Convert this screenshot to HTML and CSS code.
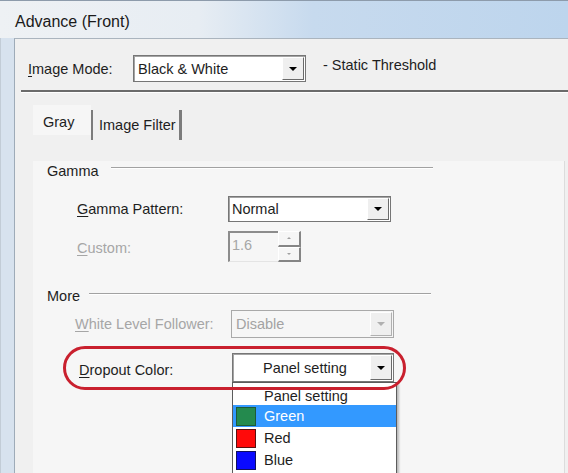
FILE: index.html
```html
<!DOCTYPE html>
<html lang="en">
<head>
    <meta charset="UTF-8">
    <meta name="viewport" content="width=device-width, initial-scale=1.0">
    <title>Advance (Front)</title>
    <link rel="stylesheet" href="styles.css">
</head>
<body>
    <div class="window">
        <!-- title bar -->
        <div class="titlebar">Advance (Front)</div>

        <div class="frame">
            <div class="client">
                <!-- image mode -->
                <div class="mode-row">
                    <span class="mode-label"><u>I</u>mage Mode:</span>
                    <div class="combo combo-mode">
                        <span class="combo-text">Black &amp; White</span>
                        <span class="combo-btn"><i class="arrow"></i></span>
                    </div>
                    <span class="mode-note">- Static Threshold</span>
                </div>
                <div class="rule"></div>

                <!-- tabs -->
                <div class="tabs">
                    <div class="tab active">Gray</div>
                    <div class="tab">Image Filter</div>
                </div>

                <div class="panel">
                    <div class="group-head">
                        <span>Gamma</span>
                        <span class="group-line"></span>
                    </div>
                    <div class="field field-gamma">
                        <span class="field-label"><u>G</u>amma Pattern:</span>
                        <div class="combo combo-gamma">
                            <span class="combo-text">Normal</span>
                            <span class="combo-btn"><i class="arrow"></i></span>
                        </div>
                    </div>
                    <div class="field field-custom">
                        <span class="field-label disabled"><u>C</u>ustom:</span>
                        <div class="spin">
                            <span class="spin-text">1.6</span>
                            <span class="spin-btns">
                                <span class="spin-btn"><i class="arrow-up"></i></span>
                                <span class="spin-btn"><i class="arrow-down"></i></span>
                            </span>
                        </div>
                    </div>

                    <div class="group-head group-more">
                        <span>More</span>
                        <span class="group-line"></span>
                    </div>
                    <div class="field field-white">
                        <span class="field-label disabled"><u>W</u>hite Level Follower:</span>
                        <div class="combo combo-off">
                            <span class="combo-text">Disable</span>
                            <span class="combo-btn"><i class="arrow"></i></span>
                        </div>
                    </div>
                    <div class="field field-dropout">
                        <span class="field-label"><u>D</u>ropout Color:</span>
                        <div class="combo combo-drop">
                            <span class="combo-text">Panel setting</span>
                            <span class="combo-btn"><i class="arrow"></i></span>
                            <ul class="drop-list">
                                <li><span class="swatch none"></span>Panel setting</li>
                                <li class="selected"><span class="swatch green"></span>Green</li>
                                <li><span class="swatch red"></span>Red</li>
                                <li><span class="swatch blue"></span>Blue</li>
                            </ul>
                        </div>
                        <div class="ring"></div>
                    </div>
                </div>
            </div>
        </div>
    </div>
</body>
</html>
```

FILE: styles.css
```css
* {
    margin: 0;
    padding: 0;
    box-sizing: border-box;
}

body {
    width: 568px;
    height: 473px;
    overflow: hidden;
    background-color: #f0f0f0;
    font-family: 'Liberation Sans', Arial, sans-serif;
    font-size: 14.5px;
    color: #1e1e1e;
}

u {
    text-decoration: underline;
    text-underline-offset: 2px;
}

/* window */
.window {
    height: 473px;
    overflow: hidden;
    display: flex;
    flex-direction: column;
    background-color: #d7e2ee;
}

.titlebar {
    height: 38px;
    flex-shrink: 0;
    padding: 5px 0 0 15px;
    display: flex;
    align-items: center;
    font-size: 16px;
    color: #1a1a1a;
    border-top: 1px solid #8d9bab;
    background: linear-gradient(90deg, #eef1f4 0%, #e7edf3 35%, #c7daee 55%, #bdd5ed 100%);
}

.frame {
    flex: 1;
    display: flex;
    padding-left: 13px;
    border-left: 1px solid #c2ccd6;
}

.client {
    flex: 1;
    background-color: #f0f0f0;
    border-left: 1px solid #9eabb8;
    border-top: 1px solid #aab4be;
}

/* image mode row */
.mode-row {
    display: flex;
    align-items: center;
    height: 27px;
    margin-top: 16px;
    padding-left: 13px;
}

.mode-label {
    width: 105px;
}

.mode-note {
    align-self: flex-start;
    line-height: 20px;
    margin-left: 17px;
}

.rule {
    margin: 8px 0 0 6px;
    height: 3px;
    border-top: 2px solid #6b6b6b;
    border-bottom: 1px solid #ffffff;
}

/* combo boxes */
.combo {
    position: relative;
    display: flex;
    background-color: #fff;
    border: 1px solid #767676;
    box-shadow: inset 1px 1px 0 #a4a4a4;
}

.combo-text {
    flex: 1;
    display: flex;
    align-items: center;
    padding-left: 4px;
    white-space: nowrap;
}

.combo-btn {
    width: 22px;
    margin: 1px;
    display: flex;
    align-items: center;
    justify-content: center;
    background-color: #efefef;
    border-top: 1px solid #fff;
    border-left: 1px solid #fff;
    border-right: 1px solid #6a6a6a;
    border-bottom: 1px solid #6a6a6a;
}

.arrow {
    width: 0;
    height: 0;
    border-left: 4px solid transparent;
    border-right: 4px solid transparent;
    border-top: 4px solid #000;
}

.combo-mode {
    width: 173px;
    height: 27px;
}

.combo-gamma {
    width: 163px;
    height: 26px;
}

.combo-gamma .combo-text {
    padding-left: 3px;
}

.combo-off {
    width: 163px;
    height: 28px;
    background-color: #f6f6f6;
    border-color: #a9a9a9;
    box-shadow: none;
    color: #a3a3a3;
}

.combo-off .combo-btn {
    border-right-color: #b0b0b0;
    border-bottom-color: #b0b0b0;
}

.combo-off .arrow {
    border-top-color: #b0b0b0;
}

.combo-drop {
    width: 162px;
    height: 29px;
}

.combo-drop .combo-text {
    padding-left: 30px;
}

/* tabs */
.tabs {
    display: flex;
    height: 30px;
    margin: 12px 0 0 18px;
}

.tab {
    height: 30px;
    display: flex;
    align-items: center;
}

.tab.active {
    width: 58px;
    padding: 4px 0 0 10px;
    background-color: #f6f6f6;
}

.tab + .tab {
    margin-top: 5px;
    padding: 0 3px 0 6px;
    border-left: 2px solid #7c7c7c;
    border-right: 3px solid #7c7c7c;
}

/* tab page */
.panel {
    width: 532px;
    height: 400px;
    margin-left: 18px;
    background-color: #f6f6f6;
    border-right: 1px solid #dcdcdc;
    overflow: visible;
}

.group-head {
    display: flex;
    align-items: center;
    height: 20px;
    margin-top: 26px;
    padding-left: 14px;
}

.group-line {
    width: 322px;
    height: 2px;
    margin: 0 0 6px 12px;
    border-top: 1px solid #a2a2a2;
    border-bottom: 1px solid #fff;
}

.group-more {
    margin-top: 24px;
}

.group-more .group-line {
    width: 342px;
    margin-left: 9px;
    margin-bottom: 4px;
}

.field {
    display: flex;
    align-items: center;
    padding-left: 44px;
}

.field-label {
    width: 151px;
    white-space: nowrap;
}

.field-label.disabled {
    color: #a6a6a6;
}

.field-gamma {
    margin-top: 15px;
    height: 26px;
}

.field-custom {
    margin-top: 9px;
    height: 31px;
}

.field-custom .field-label {
    padding-top: 3px;
}

.field-white {
    margin-top: 4px;
    height: 28px;
    padding-left: 42px;
}

.field-white .field-label {
    width: 156px;
}

.field-dropout {
    position: relative;
    margin-top: 15px;
    height: 29px;
    padding-left: 46px;
}

.field-dropout .field-label {
    width: 153px;
    padding-top: 4px;
}

/* spin box */
.spin {
    display: flex;
    width: 73px;
    height: 31px;
}

.spin-text {
    width: 50px;
    padding: 4px 0 0 2px;
    color: #a6a6a6;
    border-top: 2px solid #8c8c8c;
    border-left: 2px solid #8c8c8c;
    border-bottom: 1px solid #e4e4e4;
}

.spin-btns {
    width: 23px;
    display: flex;
    flex-direction: column;
}

.spin-btn {
    flex: 1;
    display: flex;
    align-items: center;
    justify-content: center;
    border-top: 1px solid #fff;
    border-left: 1px solid #fff;
    border-right: 2px solid #858585;
    border-bottom: 2px solid #858585;
}

.arrow-up,
.arrow-down {
    width: 0;
    height: 0;
    border-left: 2px solid transparent;
    border-right: 2px solid transparent;
}

.arrow-up {
    border-bottom: 2px solid #a0a0a0;
}

.arrow-down {
    border-top: 2px solid #a0a0a0;
}

/* open drop-down list */
.drop-list {
    position: absolute;
    top: 28px;
    left: -1px;
    width: 165px;
    height: 100px;
    list-style: none;
    background-color: #fff;
    border: 1px solid #5c5c5c;
    box-shadow: 2px 2px 2px rgba(0, 0, 0, 0.25);
    z-index: 5;
}

.drop-list li {
    height: 22px;
    display: flex;
    align-items: center;
    padding-left: 3px;
}

.drop-list li:first-child {
    padding-top: 4px;
}

.drop-list li.selected {
    background-color: #3399ff;
    color: #fff;
}

.swatch {
    width: 20px;
    height: 19px;
    margin-right: 8px;
    border: 1px solid #2a2a2a;
}

.swatch.none {
    border: none;
}

.swatch.green {
    background-color: #248a4e;
    border-color: #1d5a37;
}

.swatch.red {
    background-color: #ff0a0a;
    border-color: #5a1010;
}

.swatch.blue {
    background-color: #0a0aff;
    border-color: #101060;
}

/* red annotation ring */
.ring {
    position: absolute;
    left: 30px;
    top: -7px;
    width: 343px;
    height: 44px;
    border: 3px solid #c9202e;
    border-radius: 22px;
    pointer-events: none;
    z-index: 6;
}
```
